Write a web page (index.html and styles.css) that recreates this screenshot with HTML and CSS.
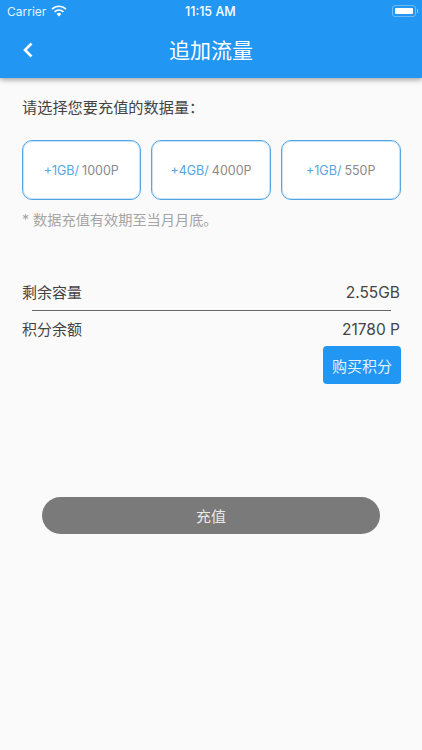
FILE: index.html
```html
<!DOCTYPE html>
<html lang="zh-CN">
<head>
    <meta charset="UTF-8">
    <meta name="viewport" content="width=device-width, initial-scale=1.0">
    <title>追加流量</title>
    <link rel="stylesheet" href="styles.css">
</head>
<body>

<header class="app-bar">
    <div class="status-bar">
        <div class="status-left">
            <span>Carrier</span>
            <svg class="wifi" width="16" height="12" viewBox="0 0 16 12">
                <path d="M8 11.6 5.6 8.9a3.5 3.5 0 0 1 4.8 0z" fill="#fff"/>
                <path d="M3.6 6.8a6.3 6.3 0 0 1 8.8 0" fill="none" stroke="#fff" stroke-width="1.7"/>
                <path d="M1 4.1a10 10 0 0 1 14 0" fill="none" stroke="#fff" stroke-width="1.7"/>
            </svg>
        </div>
        <span class="status-time">11:15 AM</span>
        <div class="battery"><div class="battery-level"></div></div>
    </div>
    <div class="title-bar">
        <svg class="back" width="14" height="18" viewBox="0 0 14 18">
            <path d="M10.5 2.5 4 9l6.500 6.500" fill="none" stroke="#fff" stroke-width="2.600"/>
        </svg>
        <h1>追加流量</h1>
    </div>
</header>

<main class="content">
    <p class="prompt">请选择您要充值的数据量：</p>

    <div class="plans">
        <div class="plan"><span class="plan-size">+1GB/</span> 1000P</div>
        <div class="plan"><span class="plan-size">+4GB/</span> 4000P</div>
        <div class="plan"><span class="plan-size">+1GB/</span> 550P</div>
    </div>

    <p class="note">* 数据充值有效期至当月月底。</p>

    <div class="row row-capacity">
        <span>剩余容量</span>
        <span class="row-value">2.55GB</span>
    </div>
    <div class="divider"></div>
    <div class="row row-points">
        <span>积分余额</span>
        <span class="row-value">21780 P</span>
    </div>
    <div class="buy-wrap">
        <button class="buy" type="button">购买积分</button>
    </div>

    <button class="submit" type="button">充值</button>
</main>

</body>
</html>
```

FILE: styles.css
```css
* {
    box-sizing: border-box;
}
html, body {
    height: 100%;
}
body {
    margin: 0;
    background-color: #fafafa;
    font-family: "Inter", "Liberation Sans", "Noto Sans CJK SC", sans-serif;
    overflow: hidden;
}
.app-bar {
    height: 78px;
    background-color: #2196f3;
    color: #fff;
    box-shadow: 0 2px 5px rgba(0, 0, 0, 0.35);
}
.status-bar {
    height: 22px;
    padding: 0 6px 0 7px;
    display: flex;
    align-items: center;
    justify-content: space-between;
    font-size: 12px;
    position: relative;
}
.status-left {
    display: flex;
    align-items: center;
    gap: 5px;
    color: #e4f2fd;
}
.status-time {
    position: absolute;
    left: 185px;
    font-size: 12.500px;
    font-weight: 500;
}
.battery {
    position: relative;
    width: 24px;
    height: 12px;
    padding: 2px;
    border: 1px solid rgba(255, 255, 255, 0.35);
    border-radius: 3px;
}
.battery::after {
    content: "";
    position: absolute;
    right: -3px;
    top: 3px;
    width: 1px;
    height: 4px;
    background-color: rgba(255, 255, 255, 0.45);
}
.battery-level {
    height: 100%;
    background-color: #fff;
    border-radius: 1px;
}
.title-bar {
    height: 56px;
    position: relative;
    display: flex;
    align-items: center;
    justify-content: center;
}
.back {
    position: absolute;
    left: 21px;
    top: 19px;
}
.title-bar h1 {
    margin: 0;
    font-size: 21px;
    font-weight: 400;
    padding-bottom: 3px;
}
.content {
    padding: 20px 21px 0 22px;
}
.prompt {
    margin: 0;
    font-size: 15.200px;
    line-height: 20px;
    color: #444;
}
.plans {
    display: flex;
    justify-content: space-between;
    margin: 22px 0.500px 0 -0.500px;
}
.plan {
    width: 119.500px;
    height: 60px;
    border: 1px solid #56a5e3;
    border-radius: 10px;
    background-color: #fff;
    box-shadow: inset 0 0 0 1px rgba(100, 173, 230, 0.35);
    display: flex;
    align-items: center;
    justify-content: center;
    gap: 3px;
    font-size: 12.500px;
    color: #8a8a8a;
}
.plan-size {
    color: #56a5e3;
}
.note {
    margin: 10px 0 0;
    font-size: 14.200px;
    line-height: 20px;
    color: #a5a5a5;
}
.row {
    display: flex;
    justify-content: space-between;
    font-size: 15px;
    line-height: 20px;
    color: #444;
    padding-right: 1px;
}
.row-value {
    font-size: 15.500px;
}
.row-capacity {
    margin-top: 53px;
}
.divider {
    height: 1px;
    margin: 7px 10px 0 10px;
    background-color: #666;
}
.row-points {
    margin-top: 9px;
}
.buy-wrap {
    display: flex;
    justify-content: flex-end;
    margin-top: 6px;
}
.buy {
    width: 78px;
    height: 38px;
    border: 0;
    border-radius: 4px;
    padding: 0;
    background-color: #2196f3;
    color: #e4f2fd;
    font: inherit;
    font-size: 15px;
}
.submit {
    display: block;
    width: 338px;
    height: 37px;
    margin: 113px 0 0 20px;
    border: 0;
    border-radius: 19px;
    padding: 0;
    background-color: #7a7a7a;
    color: #e8e8e8;
    font: inherit;
    font-size: 15px;
}
```
